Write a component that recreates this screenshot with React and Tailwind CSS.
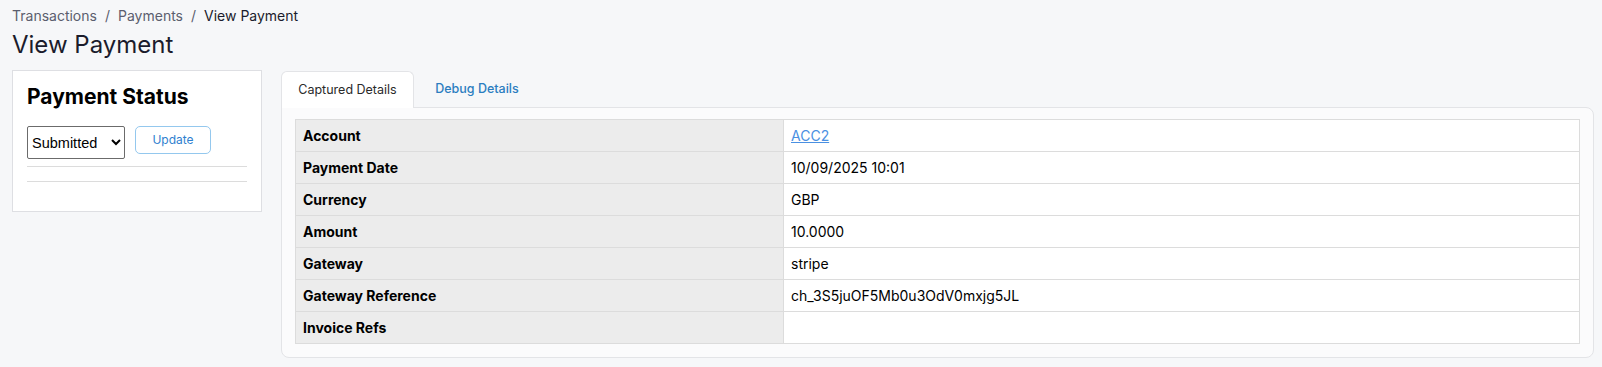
import { useState } from 'react';

const rows = [
  { label: 'Account', value: 'ACC2', link: true },
  { label: 'Payment Date', value: '10/09/2025 10:01' },
  { label: 'Currency', value: 'GBP' },
  { label: 'Amount', value: '10.0000' },
  { label: 'Gateway', value: 'stripe' },
  { label: 'Gateway Reference', value: 'ch_3S5juOF5Mb0u3OdV0mxjg5JL' },
  { label: 'Invoice Refs', value: '' },
];

const App = () => {
  const [tab, setTab] = useState('captured');

  return (
    <div className="h-[367px] overflow-hidden bg-[#f6f7f9] pl-3 pr-2 font-['Inter',sans-serif] text-[#111]">
      {/* Breadcrumb */}
      <div className="pt-[6px] text-[14px] leading-5 text-[#5b5e6e]">
        <span>Transactions</span>
        <span className="mx-2">/</span>
        <span>Payments</span>
        <span className="mx-2">/</span>
        <span className="text-[#1b1c2c]">View Payment</span>
      </div>
      <h1 className="mt-[3px] text-[24px] leading-8 text-[#1b1c2c]">View Payment</h1>

      <div className="mt-[9px] flex items-start gap-[19px]">
        {/* Payment status card */}
        <div className="h-[142px] w-[250px] shrink-0 border border-[#dedfe3] bg-white px-[14px] pt-[14px]">
          <h2 className="text-[21px] font-bold leading-6 text-black">Payment Status</h2>
          <div className="mt-[17px] flex items-start gap-[10px]">
            <select
              defaultValue="Submitted"
              className="h-[33px] w-[98px] rounded-[2px] border border-[#6b6b6b] bg-white pl-0 font-['Liberation_Sans',Arial,sans-serif] text-[14.5px] text-black"
            >
              <option>Submitted</option>
              <option>Pending</option>
              <option>Failed</option>
            </select>
            <button className="h-[28px] w-[76px] rounded-[5px] border border-[#94c8ee] bg-white text-[12px] text-[#2f7fcf]">
              Update
            </button>
          </div>
          <div className="mt-[7px] border-t border-[#dcdcdc]" />
          <div className="mt-[14px] border-t border-[#dcdcdc]" />
        </div>

        {/* Tabs panel */}
        <div className="flex-1 pt-px">
          <div className="flex text-[12.5px]">
            <button
              onClick={() => setTab('captured')}
              className={
                tab === 'captured'
                  ? 'relative z-10 -mb-px h-[37px] w-[133px] rounded-t-md border border-b-0 border-[#e3e4e7] bg-white text-[#2a2a2a]'
                  : 'h-[36px] w-[133px] font-medium text-[#2b7dc0]'
              }
            >
              Captured Details
            </button>
            <button
              onClick={() => setTab('debug')}
              className={
                tab === 'debug'
                  ? 'relative z-10 -mb-px ml-[4px] h-[37px] w-[118px] rounded-t-md border border-b-0 border-[#e3e4e7] bg-white text-[#2a2a2a]'
                  : 'ml-[4px] h-[36px] w-[118px] font-medium text-[#2b7dc0]'
              }
            >
              Debug Details
            </button>
          </div>
          <div className="rounded-b-lg rounded-tr-lg border border-[#e3e4e7] bg-[#fbfbfc] px-[13px] pb-[13px] pt-[11px]">
            {tab === 'captured' ? (
              <table className="w-full border-collapse text-[14px]">
                <tbody>
                  {rows.map((r) => (
                    <tr key={r.label} className="h-[32px]">
                      <td className="w-[488px] border border-[#dcdcdc] bg-[#ececec] px-[7px] font-bold text-black">
                        {r.label}
                      </td>
                      <td className="border border-[#dcdcdc] bg-white px-[7px] text-black">
                        {r.link ? (
                          <a href="#" className="text-[#4a90e2] underline">
                            {r.value}
                          </a>
                        ) : (
                          r.value
                        )}
                      </td>
                    </tr>
                  ))}
                </tbody>
              </table>
            ) : (
              <div className="h-[224px]" />
            )}
          </div>
        </div>
      </div>
    </div>
  );
};

export default App;
